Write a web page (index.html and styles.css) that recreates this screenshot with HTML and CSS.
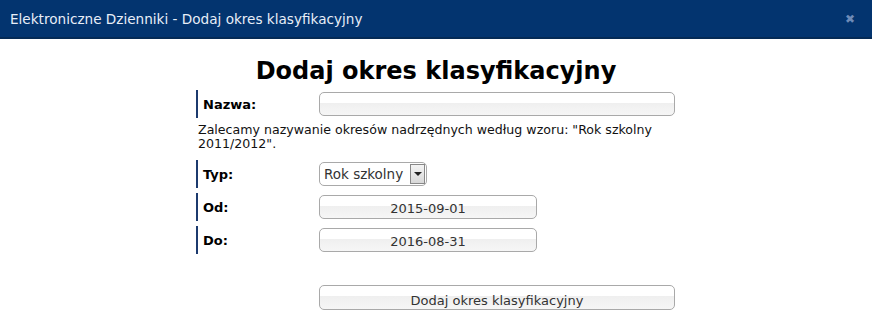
FILE: index.html
```html
<!DOCTYPE html>
<html lang="pl">
<head>
  <meta charset="UTF-8">
  <title>Dodaj okres klasyfikacyjny</title>
  <link rel="stylesheet" href="styles.css">
</head>
<body>

  <div class="title-bar">
    <span>Elektroniczne Dzienniki - Dodaj okres klasyfikacyjny</span>
    <span class="close-btn">&#x2716;</span>
  </div>

  <h1>Dodaj okres klasyfikacyjny</h1>

  <form class="form">
    <div class="row">
      <label class="label">Nazwa:</label>
      <div class="field wide"></div>
    </div>
    <p class="hint">Zalecamy nazywanie okresów nadrzędnych według wzoru: "Rok szkolny 2011/2012".</p>
    <div class="row">
      <label class="label">Typ:</label>
      <div class="select">
        <span>Rok szkolny</span>
        <span class="arrow"></span>
      </div>
    </div>
    <div class="row">
      <label class="label">Od:</label>
      <div class="field date">2015-09-01</div>
    </div>
    <div class="row">
      <label class="label">Do:</label>
      <div class="field date">2016-08-31</div>
    </div>
    <div class="actions">
      <div class="field wide submit">Dodaj okres klasyfikacyjny</div>
    </div>
  </form>

</body>
</html>
```

FILE: styles.css
```css
body {
  margin: 0;
  background: #fff;
  font-family: "DejaVu Sans", Verdana, sans-serif;
  color: #000;
}

.title-bar {
  height: 37px;
  background: #03346f;
  border-bottom: 2px solid #052a55;
  color: #e8eef8;
  font-size: 13.6px;
  display: flex;
  align-items: center;
  justify-content: space-between;
  padding: 0 17px 0 10px;
}

.close-btn {
  color: #6e8bb8;
  font-size: 12px;
  font-weight: bold;
}

h1 {
  margin: 17px 0 0;
  text-align: center;
  font-size: 24px;
  font-weight: bold;
  line-height: 30px;
}

.form {
  width: 480px;
  margin: 4px auto 0 196px;
}

.row {
  display: flex;
  align-items: center;
  border-left: 2px solid #1c3a6e;
  height: 28px;
  margin-bottom: 5px;
}

.label {
  width: 121px;
  padding-left: 5px;
  box-sizing: border-box;
  font-size: 13px;
  font-weight: bold;
}

.field {
  height: 24px;
  box-sizing: border-box;
  border: 1px solid #a9a9a9;
  border-radius: 5px;
  background: linear-gradient(#fff 0, #fff 45%, #efefef 45%, #f6f6f6 100%);
  font-size: 13px;
  color: #333;
  display: flex;
  align-items: center;
  justify-content: center;
  padding-top: 2px;
}

.wide {
  width: 356px;
}

.date {
  width: 218px;
}

.hint {
  margin: 1px 0 9px 2px;
  font-size: 12.6px;
  line-height: 14px;
  color: #111;
}

.select {
  display: flex;
  align-items: center;
  height: 24px;
  box-sizing: border-box;
  border: 1px solid #a9a9a9;
  border-radius: 5px;
  background: #fff;
  font-size: 13.5px;
  color: #333;
  padding-left: 4px;
}

.arrow {
  width: 15px;
  height: 20px;
  margin: 0 1px 0 7px;
  box-sizing: border-box;
  border: 1px solid #888;
  background: linear-gradient(#f4f4f4, #d8d8d8);
  position: relative;
}

.arrow::after {
  content: "";
  position: absolute;
  left: 3px;
  top: 7px;
  border-left: 4px solid transparent;
  border-right: 4px solid transparent;
  border-top: 4px solid #222;
}

.actions {
  padding: 26px 0 0 123px;
}

.submit {
  height: 25px;
  padding-top: 6px;
}
```
